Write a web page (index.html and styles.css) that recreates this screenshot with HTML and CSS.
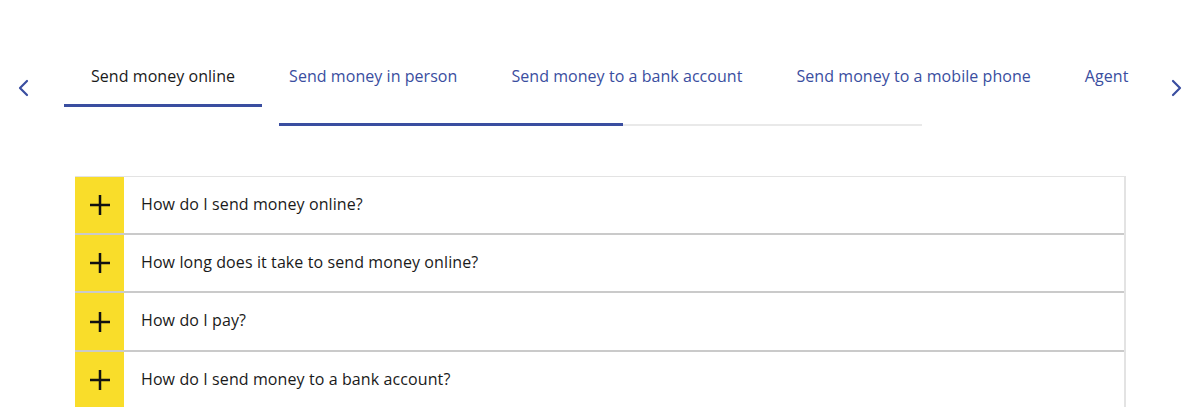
FILE: index.html
```html
<!DOCTYPE html>
<html lang="en">
<head>
<meta charset="utf-8">
<title>FAQ tabs</title>
<link rel="stylesheet" href="styles.css">
</head>
<body>
<div class="page">
  <nav class="tabnav">
    <button class="arrow arrow-left" aria-label="Previous">
      <svg width="12" height="18" viewBox="0 0 12 18"><path d="M10 2 L3 9 L10 16" fill="none" stroke="#3a4ea0" stroke-width="2.2" stroke-linecap="round" stroke-linejoin="round"/></svg>
    </button>
    <div class="tabs">
      <div class="tab active">Send money online</div>
      <div class="tab">Send money in person</div>
      <div class="tab">Send money to a bank account</div>
      <div class="tab">Send money to a mobile phone</div>
      <div class="tab">Agent</div>
    </div>
    <button class="arrow arrow-right" aria-label="Next">
      <svg width="12" height="18" viewBox="0 0 12 18"><path d="M2 2 L9 9 L2 16" fill="none" stroke="#3a4ea0" stroke-width="2.2" stroke-linecap="round" stroke-linejoin="round"/></svg>
    </button>
  </nav>
  <div class="scrollbar">
    <div class="thumb"></div>
    <div class="track"></div>
  </div>
  <div class="accordion">
    <div class="item">
      <div class="icon"><svg width="22" height="22" viewBox="0 0 22 22"><path d="M11 1 V21 M1 11 H21" stroke="#111" stroke-width="2.5"/></svg></div>
      <div class="question">How do I send money online?</div>
    </div>
    <div class="item">
      <div class="icon"><svg width="22" height="22" viewBox="0 0 22 22"><path d="M11 1 V21 M1 11 H21" stroke="#111" stroke-width="2.5"/></svg></div>
      <div class="question">How long does it take to send money online?</div>
    </div>
    <div class="item">
      <div class="icon"><svg width="22" height="22" viewBox="0 0 22 22"><path d="M11 1 V21 M1 11 H21" stroke="#111" stroke-width="2.5"/></svg></div>
      <div class="question">How do I pay?</div>
    </div>
    <div class="item">
      <div class="icon"><svg width="22" height="22" viewBox="0 0 22 22"><path d="M11 1 V21 M1 11 H21" stroke="#111" stroke-width="2.5"/></svg></div>
      <div class="question">How do I send money to a bank account?</div>
    </div>
  </div>
</div>
</body>
</html>
```

FILE: styles.css
```css
* { box-sizing: border-box; }
html, body { margin: 0; padding: 0; background: #fff; }
body {
  font-family: "Open Sans", "Liberation Sans", sans-serif;
  color: #1a1a1a;
  overflow: hidden;
}
.page { padding-top: 50px; }

.tabnav {
  display: flex;
  align-items: flex-start;
  height: 57px;
}
.arrow {
  background: none;
  border: 0;
  padding: 0;
  width: 64px;
  height: 57px;
  display: flex;
  align-items: center;
  cursor: pointer;
}
.arrow-left { justify-content: flex-start; padding-left: 17px; padding-top: 18px; }
.arrow-right { justify-content: flex-end; padding-right: 17px; padding-top: 18px; width: 42px; }

.tabs {
  flex: 1;
  display: flex;
  overflow: hidden;
}
.tab {
  flex: none;
  white-space: nowrap;
  font-size: 16px;
  line-height: 20px;
  letter-spacing: 0.05px;
  padding: 16px 27px 18px;
  border-bottom: 3px solid transparent;
  color: #3a4ea0;
}
.tab.active {
  color: #1a1a1a;
  border-bottom-color: #3a4ea0;
}

.scrollbar {
  width: 643px;
  margin: 16px auto 0;
  display: flex;
  align-items: flex-end;
  height: 3px;
}
.thumb { width: 344px; height: 3px; background: #3a4ea0; }
.track { flex: 1; height: 2px; background: #e9e9e9; }

.accordion {
  margin: 50px 0 0 75px;
  width: 1051px;
  border-top: 1px solid #e3e3e3;
  border-right: 2px solid #e3e3e3;
}
.item {
  display: flex;
  height: 58px;
  border-bottom: 2px solid #cacaca;
}
.item:nth-child(3) { height: 59px; }
.icon {
  width: 49px;
  flex: none;
  background: #f9dd2a;
  display: flex;
  align-items: center;
  justify-content: center;
}
.question {
  flex: 1;
  display: flex;
  align-items: center;
  padding-left: 17px;
  padding-bottom: 3px;
  font-size: 16px;
  letter-spacing: 0.1px;
  color: #1a1a1a;
}
```
